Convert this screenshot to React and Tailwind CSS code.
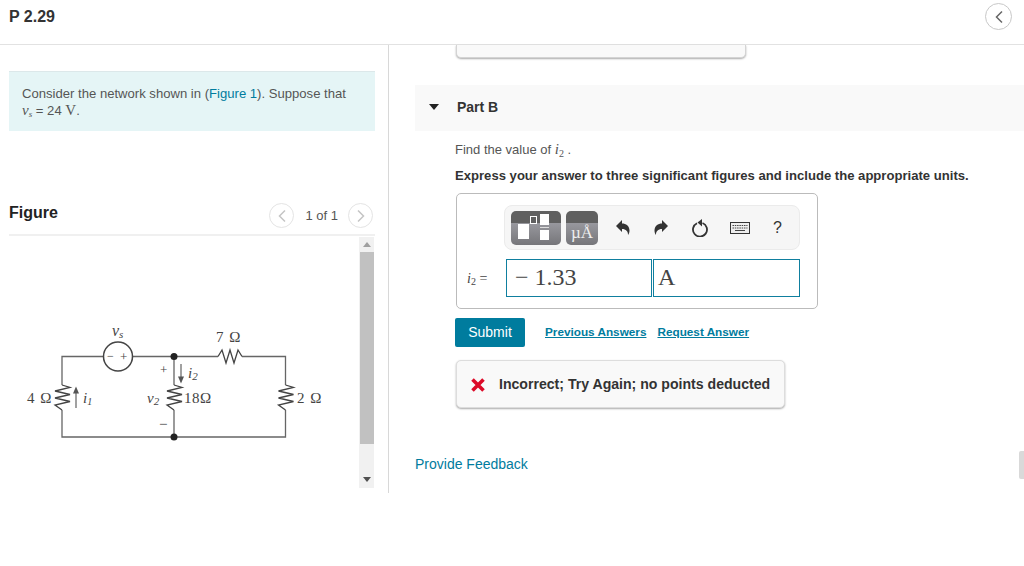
import React from 'react';

const sans = "font-['Liberation_Sans',Arial,sans-serif]";
const serif = "font-['Liberation_Serif','Times_New_Roman',serif]";

const Circle = ({ dir, faint }) => (
  <span className={`flex items-center justify-center rounded-full border bg-white ${faint ? 'w-[25px] h-[25px] border-[#e4e4e4]' : 'w-[27px] h-[27px] border-[#c8c8c8]'}`}>
    <svg width="10" height="14" viewBox="0 0 10 14" fill="none" stroke={faint ? '#c4c4c4' : '#666'} strokeWidth="1.5">
      <path d={dir === 'left' ? 'M8 1.5 2.5 7 8 12.5' : 'M2 1.5 7.5 7 2 12.5'} />
    </svg>
  </span>
);

const Circuit = () => (
  <svg width="350" height="251" viewBox="9 237 350 251" className="block">
    <g fill="none" stroke="#666" strokeWidth="1.3">
      <path d="M62 385V356.5H103.5M132.5 356.5H218M242 356.5H285.5V385M285.5 410V437H62V410" />
      <path d="M174 356.5V385M174 410V437" />
      <path stroke="#444" d="M62 385 70 387.5 55 391 70 394.5 55 398 70 401.5 55 405 62 410" />
      <path stroke="#444" d="M174 385 182 387.5 167 391 182 394.5 167 398 182 401.5 167 405 174 410" />
      <path stroke="#444" d="M285.5 385 293.5 387.5 278.5 391 293.5 394.5 278.5 398 293.5 401.5 278.5 405 285.5 410" />
      <path stroke="#444" d="M218 356.5 222 350 226 363 230 350 234 363 238 350 242 356.5" />
      <circle cx="118" cy="356.5" r="14.5" stroke="#444" strokeWidth="1.5" />
      <path d="M76 408V390M181 364V380" stroke="#555" strokeWidth="1.1" />
    </g>
    <path d="M76 386.500l-3 7h6zM181 383.500l-3-7h6z" fill="#555" />
    <circle cx="174" cy="356.5" r="3.5" fill="#222" />
    <circle cx="174" cy="437" r="3.5" fill="#222" />
    <g className={serif} fill="#444" fontSize="15">
      <text x="216" y="342" letterSpacing="1">7 Ω</text>
      <text x="27" y="403" letterSpacing="1">4 Ω</text>
      <text x="184" y="403" letterSpacing=".5">18Ω</text>
      <text x="297" y="403" letterSpacing="1">2 Ω</text>
      <text x="83" y="403" fontStyle="italic" fontSize="15">i<tspan fontSize="10" dy="2">1</tspan></text>
      <text x="188" y="378" fontStyle="italic" fontSize="15">i<tspan fontSize="11" dy="2">2</tspan></text>
      <text x="147" y="403" fontStyle="italic" fontSize="15">v<tspan fontSize="11" dy="2">2</tspan></text>
      <text x="112" y="336" fontStyle="italic" fontSize="16">v<tspan fontSize="11" dy="2">s</tspan></text>
      <text x="160" y="374" fontSize="13">+</text>
      <text x="159" y="429" fontSize="15">−</text>
      <text x="107" y="360" fontSize="12">−</text>
      <text x="120" y="361" fontSize="13">+</text>
    </g>
  </svg>
);

const Scrollbar = () => (
  <div className="w-[15px] h-[251px] bg-[#f1f1f1] flex flex-col items-center">
    <div className="h-[15px] flex items-center justify-center">
      <svg width="8" height="5" viewBox="0 0 8 5"><path d="M4 0 8 5H0z" fill="#a0a0a0" /></svg>
    </div>
    <div className="w-[14px] h-[192px] bg-[#c1c1c1]" />
    <div className="flex-1 flex items-end pb-[6px]">
      <svg width="8" height="5" viewBox="0 0 8 5"><path d="M4 5 8 0H0z" fill="#505050" /></svg>
    </div>
  </div>
);

const Toolbar = () => (
  <div className="ml-[47px] w-[296px] h-[45px] rounded-lg border border-[#ebebeb] bg-[#f6f6f6] flex items-center pl-[6px]">
    <div className="w-[50px] h-[34px] rounded-[5px] bg-[linear-gradient(#606060_0_35%,#98989e_35%,#76767a_100%)] relative">
      <span className="absolute left-[7px] top-[13px] w-[11px] h-[15px] bg-white" />
      <span className="absolute left-[19px] top-[5px] w-[7px] h-[8px] border border-white" />
      <span className="absolute left-[29px] top-[3px] w-[9px] h-[11px] bg-white" />
      <span className="absolute left-[29px] top-[16px] w-[9px] h-[1px] bg-[#ddd]" />
      <span className="absolute left-[29px] top-[19px] w-[9px] h-[10px] bg-white" />
    </div>
    <div className={`ml-[5px] w-[32px] h-[34px] rounded-[5px] bg-[linear-gradient(#606060_0_35%,#98989e_35%,#76767a_100%)] text-[#eee] text-[17px] ${serif} flex items-end justify-center pb-[4px]`}>
      <span className="leading-none">µÅ</span>
    </div>
    <svg className="ml-[18px]" width="14" height="16" viewBox="0 0 14 16">
      <path d="M0 6 6 0v3.500c4 0 7.500 2.500 7.500 7 0 2-.8 3.500-1.500 4.500.2-3.500-2-6-6-6V12z" fill="#333" />
    </svg>
    <svg className="ml-[24px]" width="14" height="16" viewBox="0 0 14 16">
      <path d="M14 6 8 0v3.500c-4 0-7.500 2.500-7.500 7 0 2 .8 3.500 1.500 4.500-.2-3.500 2-6 6-6V12z" fill="#333" />
    </svg>
    <svg className="ml-[24px]" width="16" height="18" viewBox="0 0 16 18" fill="none">
      <path d="M5 4.200A7 7 0 1 0 10.500 4" stroke="#333" strokeWidth="1.800" />
      <path d="M10 0v7.500L5.500 3.500z" fill="#333" />
    </svg>
    <svg className="ml-[22px]" width="20" height="12" viewBox="0 0 20 12" fill="none">
      <rect x=".5" y=".5" width="19" height="11" fill="#eee" stroke="#333" />
      <path d="M2.500 3.500h15M2.500 6h15" stroke="#444" strokeDasharray="1.500 .8" />
      <path d="M5 8.500h10" stroke="#444" />
    </svg>
    <span className={`ml-[23px] text-[16px] text-[#333] ${sans}`}>?</span>
  </div>
);

export default function App() {
  return (
    <div className={`w-[1024px] h-[566px] overflow-hidden relative bg-white ${sans} text-[#333]`}>
      <header className="h-[45px] border-b border-[#e2e2e2] flex items-center justify-between pl-[9px] pr-[12px] pb-[14px] pt-[3px]">
        <h1 className="text-[16px] font-bold text-[#333]">P 2.29</h1>
        <Circle dir="left" />
      </header>

      <div className="flex items-start">
        <aside className="w-[389px] h-[448px] border-r border-[#d8d8d8] pl-[9px] pr-[13px] pt-[26px]">
          <div className="h-[60px] bg-[#e5f5f6] border-t border-[#dce8ea] pl-[13px] pt-[14px] text-[13.100px] leading-[16px] text-[#555]">
            <p>Consider the network shown in (<span className="text-[#007c9e]">Figure 1</span>). Suppose that</p>
            <p><span className={`${serif} italic text-[15px]`}>v<sub className="text-[9px]">s</sub></span> = 24 <span className={`${serif} text-[15px]`}>V</span>.</p>
          </div>
          <div className="mt-[70px] h-[35px] flex items-start justify-between border-b-2 border-[#f0f0f0]">
            <h2 className="text-[16px] font-bold text-[#222] leading-[22px] pt-[1px]">Figure</h2>
            <div className="flex items-center text-[13px] text-[#555] mt-[2px] mr-[2px]">
              <Circle dir="left" faint />
              <span className="ml-[11px] mr-[10px]">1 of 1</span>
              <Circle dir="right" faint />
            </div>
          </div>
          <div className="flex items-start mt-[1px]">
            <Circuit />
            <Scrollbar />
          </div>
        </aside>

        <main className="flex-1">
          <div className="ml-[67px] w-[290px] h-[13px] bg-[#f9f9f9] border-x border-b border-[#d4d4d4] rounded-b-[5px] shadow-[0_1px_2px_#aaa]" />
          <section className="mt-[27px] ml-[26px] h-[46px] bg-[#f9f9f9] flex items-center pl-[14px] pb-[2px]">
            <svg width="10" height="6" viewBox="0 0 10 6"><path d="M0 0h10L5 6z" fill="#222" /></svg>
            <h3 className="ml-[18px] text-[14px] font-bold text-[#333]">Part B</h3>
          </section>
          <div className="ml-[66px]">
            <p className="mt-[10px] text-[13px] leading-[16px] text-[#555]">
              Find the value of <span className={`${serif} italic text-[15px]`}>i<sub className="text-[10px] not-italic">2</sub></span> .
            </p>
            <p className="mt-[10px] text-[13.100px] leading-[16px] font-bold text-[#333]">
              Express your answer to three significant figures and include the appropriate units.
            </p>
            <div className="mt-[9px] ml-px w-[362px] h-[116px] rounded-[5px] border border-[#bbb] pt-[11px]">
              <Toolbar />
              <div className="mt-[9px] flex items-center">
                <span className={`w-[49px] pl-[10px] ${serif} text-[14px] text-[#444] whitespace-nowrap`}>
                  <i>i</i><sub className="text-[10px]">2</sub> =
                </span>
                <div className={`w-[146px] h-[38px] border border-[#0f7f9f] flex items-center pl-[8px] pb-[2px] ${serif} text-[24px] text-[#444]`}>− 1.33</div>
                <div className={`ml-px w-[147px] h-[38px] border border-[#0f7f9f] flex items-center pl-[4px] pb-[2px] ${serif} text-[24px] text-[#444]`}>A</div>
              </div>
            </div>
            <div className="mt-[9px] flex items-center">
              <button className="w-[70px] h-[29px] rounded-[2px] bg-[#007c9e] text-white text-[14px] pb-[1px]">Submit</button>
              <a className="ml-[20px] mb-[2px] text-[11.750px] font-bold text-[#007c9e] underline">Previous Answers</a>
              <a className="ml-[11px] mb-[2px] text-[11.750px] font-bold text-[#007c9e] underline">Request Answer</a>
            </div>
            <div className="mt-[13px] ml-px w-[329px] h-[48px] rounded-[5px] border border-[#ddd] bg-[#f9f9f9] shadow-[0_1px_2px_#aaa] flex items-center pl-[14px] pt-[2px]">
              <svg width="14" height="14" viewBox="0 0 14 14"><path d="M1.500 1.500l11 11M12.500 1.500l-11 11" stroke="#dc0a28" strokeWidth="3.600" /></svg>
              <span className="ml-[14px] text-[14.100px] font-bold text-[#333]">Incorrect; Try Again; no points deducted</span>
            </div>
          </div>
          <a className="block mt-[46px] ml-[26px] text-[14px] text-[#007c9e]">Provide Feedback</a>
        </main>
      </div>

      <div className="absolute right-0 top-[451px] w-[5px] h-[28px] rounded-l-[2px] bg-[#d9d9d9]" />
    </div>
  );
}
